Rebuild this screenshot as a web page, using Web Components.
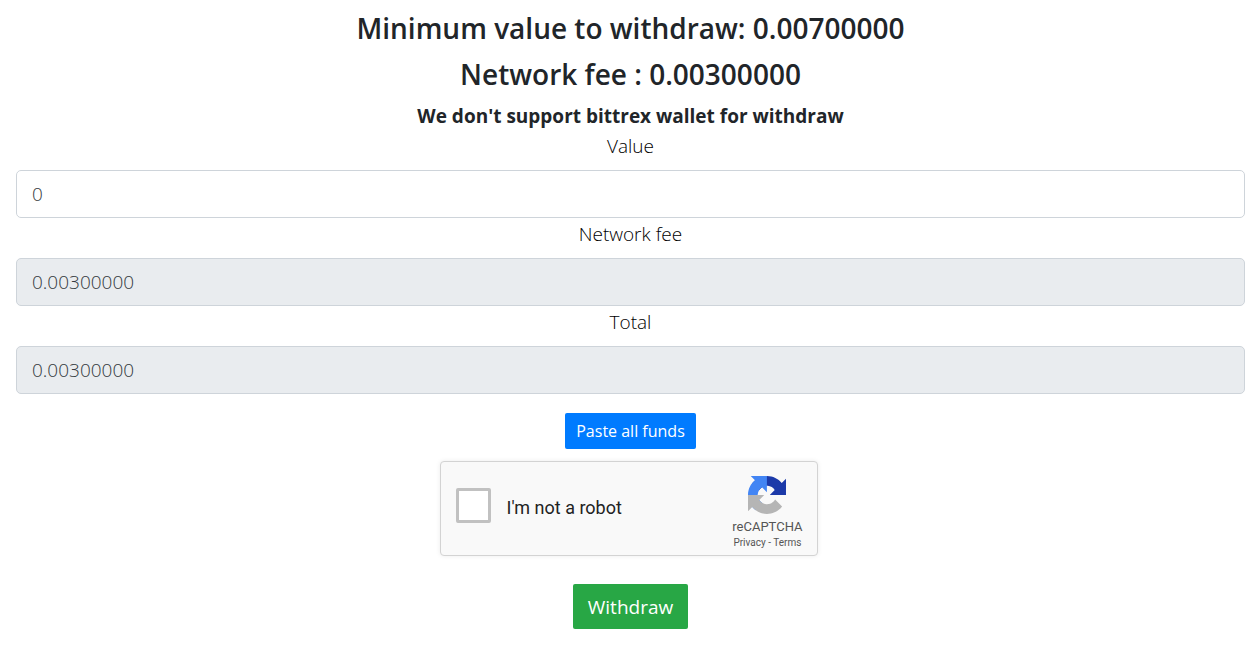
<!DOCTYPE html>
<html lang="en">
<head>
<meta charset="utf-8">
<meta name="viewport" content="width=device-width, initial-scale=1">
<title>Withdraw</title>
<style>
body { margin: 0; background: #fff; color: #212529; font-family: "Open Sans", "Noto Sans", sans-serif; }
</style>
</head>
<body>
<withdraw-form>
  <span slot="minimum">Minimum value to withdraw: 0.00700000</span>
  <span slot="fee">Network fee : 0.00300000</span>
  <span slot="notice">We don't support bittrex wallet for withdraw</span>
  <amount-field label="Value" value="0"></amount-field>
  <amount-field label="Network fee" value="0.00300000" readonly></amount-field>
  <amount-field label="Total" value="0.00300000" readonly></amount-field>
  <action-button slot="paste" kind="primary">Paste all funds</action-button>
  <robot-check slot="check"></robot-check>
  <action-button slot="submit" kind="success">Withdraw</action-button>
</withdraw-form>
<script>
class WithdrawForm extends HTMLElement {
  constructor() {
    super();
    this.attachShadow({ mode: "open" }).innerHTML = `
      <style>
        :host { display: block; padding: 10px 15px 20px 16px; text-align: center; }
        h3 { margin: 0 0 10px; font-size: 28px; line-height: 36px; font-weight: 600; }
        p { margin: 0; font-size: 19px; line-height: 28px; font-weight: 700; }
        .actions { display: flex; flex-direction: column; align-items: center; padding-top: 19px; }
        slot[name="check"] { display: block; padding: 12px 0 28px; }
      </style>
      <h3><slot name="minimum"></slot></h3>
      <h3><slot name="fee"></slot></h3>
      <p><slot name="notice"></slot></p>
      <slot></slot>
      <div class="actions">
        <slot name="paste"></slot>
        <slot name="check"></slot>
        <slot name="submit"></slot>
      </div>`;
  }
}
class AmountField extends HTMLElement {
  constructor() {
    super();
    this.attachShadow({ mode: "open" }).innerHTML = `
      <style>
        :host { display: block; }
        label { display: block; padding-bottom: 8px; color: #000; font-size: 19px; line-height: 32px; font-weight: 300; }
        input { display: block; box-sizing: border-box; width: 100%; height: 48px; margin: 0; padding: 8px 15px;
          border: 1px solid #ced4da; border-radius: 5px; background: #fff; color: #343a40;
          font: 300 19px/30px "Open Sans", "Noto Sans", sans-serif; }
        input:read-only { background: #e9ecef; }
        input:focus { outline: 0; border-color: #80bdff; }
      </style>
      <label for="amount"></label>
      <input id="amount" type="text">`;
    const input = this.shadowRoot.querySelector("input");
    this.shadowRoot.querySelector("label").textContent = this.getAttribute("label");
    input.value = this.getAttribute("value");
    input.readOnly = this.hasAttribute("readonly");
  }
}
class ActionButton extends HTMLElement {
  constructor() {
    super();
    this.attachShadow({ mode: "open" }).innerHTML = `
      <style>
        :host { display: block; }
        button { display: block; margin: 0; border: 0; border-radius: 2px; color: #fff; cursor: pointer;
          font-family: inherit; font-weight: 400; }
        :host([kind="primary"]) button { height: 36px; padding: 0 11px; background: #007bff; font-size: 16px; }
        :host([kind="success"]) button { height: 45px; padding: 0 15px; background: #28a745; font-size: 19px; }
      </style>
      <button type="button"><slot></slot></button>`;
  }
}
class RobotCheck extends HTMLElement {
  constructor() {
    super();
    this.attachShadow({ mode: "open" }).innerHTML = `
      <style>
        :host { display: flex; box-sizing: border-box; width: 378px; max-width: 100%; height: 95px; margin-right: 4px;
          border: 1px solid #d3d3d3; border-radius: 4px; background: #f9f9f9; box-shadow: 0 0 5px rgba(0,0,0,.08);
          font-family: Roboto, sans-serif; }
        .choice { display: flex; flex: 1; align-items: center; gap: 16px; padding: 0 0 6px 15px; }
        input { appearance: none; box-sizing: border-box; width: 35px; height: 35px; margin: 0;
          border: 3px solid #c1c1c1; border-radius: 2px; background: #fff; }
        label { padding-top: 4px; color: #222; font-size: 18px; line-height: 22px; }
        .brand { display: flex; flex-direction: column; align-items: center; padding: 14px 14px 0 0; color: #555; }
        svg { display: block; width: 38px; height: 38px; }
        .name { padding-top: 5px; font-size: 13px; line-height: 16px; }
        nav { font-size: 10px; line-height: 16px; }
        a { color: inherit; text-decoration: none; }
      </style>
      <div class="choice">
        <input id="robot" type="checkbox">
        <label for="robot">I'm not a robot</label>
      </div>
      <div class="brand">
        <svg viewBox="0 0 64 64" aria-hidden="true">
          <path fill="#1c3aa9" d="M64 31.955l-.033-1.37V4.687l-7.16 7.16C50.948 4.674 42.033.093 32.05.093c-10.4 0-19.622 4.96-25.458 12.64l11.736 11.86a15.55 15.55 0 0 1 4.754-5.334c2.05-1.6 4.952-2.906 8.968-2.906.485 0 .86.057 1.135.163 4.976.393 9.288 3.14 11.828 7.124l-8.307 8.307L64 31.953"/>
          <path fill="#4285f4" d="M31.862.094l-1.37.033H4.594l7.16 7.16C4.58 13.147 0 22.06 0 32.046c0 10.4 4.96 19.622 12.64 25.458L24.5 45.768a15.55 15.55 0 0 1-5.334-4.754c-1.6-2.05-2.906-4.952-2.906-8.968 0-.485.057-.86.163-1.135.393-4.976 3.14-9.288 7.124-11.828l8.307 8.307L31.86.095"/>
          <path fill="#b5b5b5" d="M.001 32.045l.033 1.37v25.898l7.16-7.16c5.86 7.173 14.774 11.754 24.76 11.754 10.4 0 19.622-4.96 25.458-12.64l-11.736-11.86a15.55 15.55 0 0 1-4.754 5.334c-2.05 1.6-4.952 2.906-8.968 2.906-.485 0-.86-.057-1.135-.163-4.976-.393-9.288-3.14-11.828-7.124l8.307-8.307c-10.522.04-22.4.066-27.295-.005"/>
        </svg>
        <div class="name">reCAPTCHA</div>
        <nav><a href="#privacy">Privacy</a> - <a href="#terms">Terms</a></nav>
      </div>`;
  }
}
customElements.define("amount-field", AmountField);
customElements.define("action-button", ActionButton);
customElements.define("robot-check", RobotCheck);
customElements.define("withdraw-form", WithdrawForm);
</script>
</body>
</html>
